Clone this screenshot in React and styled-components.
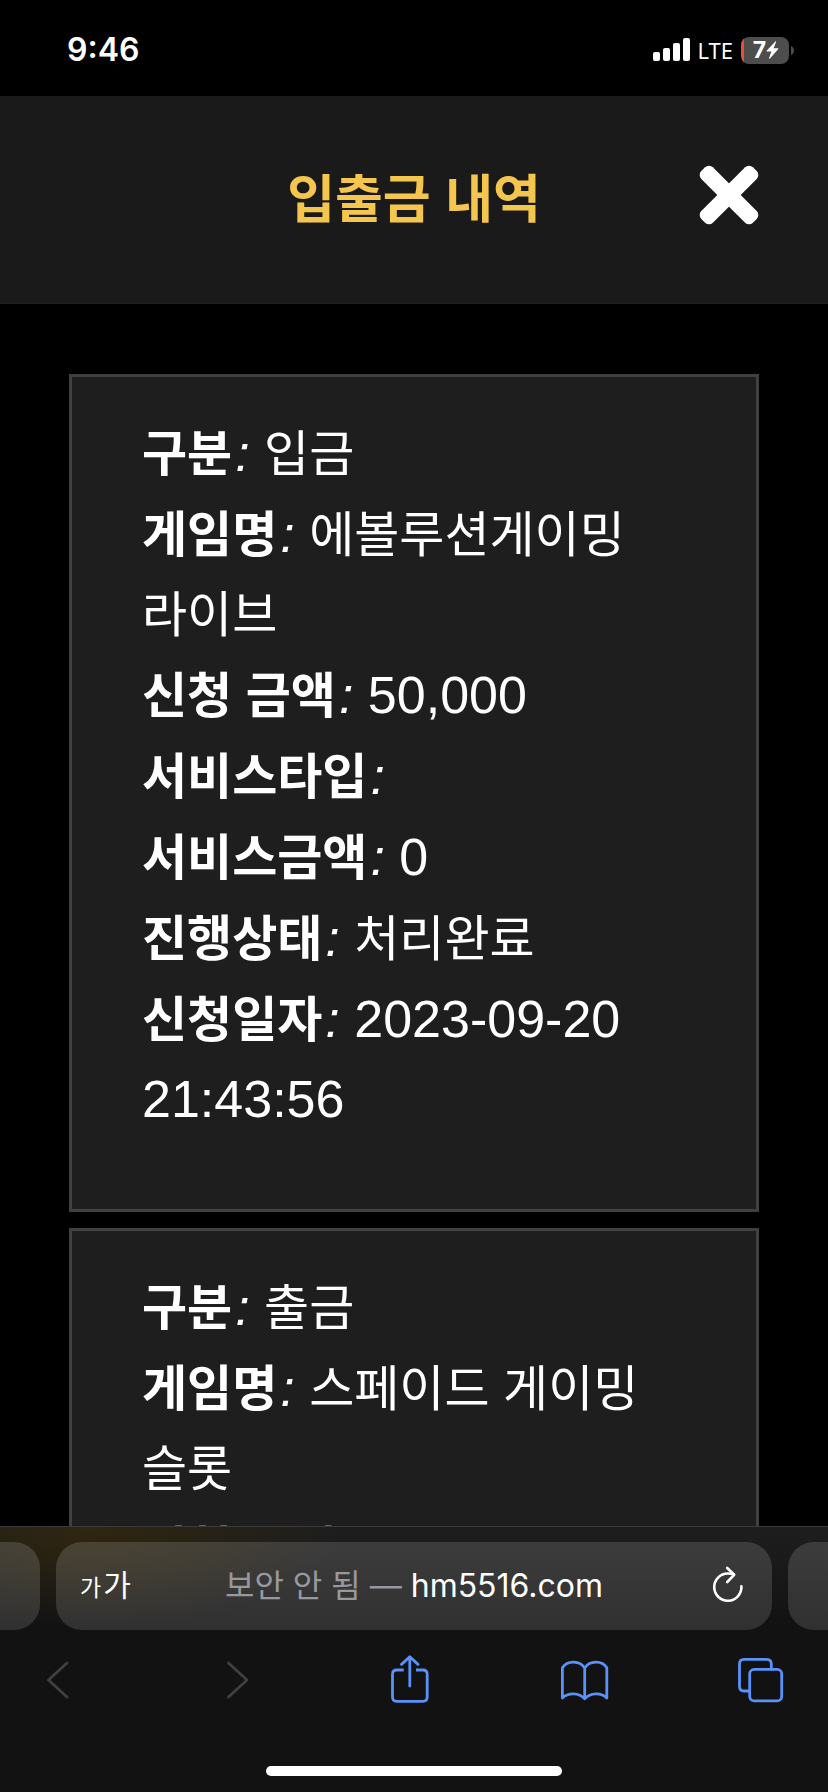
import React from "react";
import styled, { createGlobalStyle } from "styled-components";

const GlobalStyle = createGlobalStyle`
    * {
        box-sizing: border-box;
    }
    body {
        margin: 0;
        background: #000;
    }
    button {
        margin: 0;
        padding: 0;
        border: 0;
        background: none;
        color: inherit;
        font: inherit;
        cursor: pointer;
    }
`;
const Screen = styled.div`
    display: flex;
    flex-direction: column;
    height: 100vh;
    overflow: hidden;
    background: #000;
    color: #fff;
    font-family: "Liberation Sans", "Noto Sans CJK KR", sans-serif;
`;

// 상태바
const StatusBar = styled.div`
    display: flex;
    flex: none;
    align-items: center;
    justify-content: space-between;
    height: 96px;
    padding: 4px 34px 0 67px;
    font-family: "Inter", sans-serif;
`;
const Time = styled.time`
    font-size: 32px;
    line-height: 40px;
    font-weight: 600;
`;
const StatusRight = styled.div`
    display: flex;
    align-items: center;
`;
const Network = styled.span`
    margin: 0 8px 0 6px;
    font-family: "Noto Sans", sans-serif;
    font-size: 22px;
    line-height: 28px;
`;
const Battery = styled.div`
    display: flex;
    align-items: center;
    justify-content: center;
    width: 48px;
    height: 27px;
    margin-right: 2px;
    padding-left: 2px;
    overflow: hidden;
    border-radius: 8px;
    background: linear-gradient(to right, #eb4e3d 3px, #4d4d4d 3px);
    font-size: 23px;
    line-height: 27px;
    font-weight: 700;
`;

// 헤더부분
const Header = styled.header`
    display: grid;
    flex: none;
    grid-template-columns: 1fr auto 1fr;
    align-items: center;
    height: 208px;
    padding: 0 59px;
    border-bottom: 1px solid #202020;
    background: #1a1a1a;
`;
const Title = styled.h1`
    grid-column: 2;
    margin: 0;
    color: #f5c64e;
    font-size: 52px;
    line-height: 80px;
    font-weight: 700;
`;
const CloseButton = styled.button`
    display: flex;
    justify-self: end;
    margin-bottom: 10px;
`;

// 내역 목록
const History = styled.main`
    display: flex;
    flex: 1;
    flex-direction: column;
    gap: 16px;
    min-height: 0;
    padding: 70px 69px 0;
    overflow: hidden;
`;
const Card = styled.article`
    display: flex;
    flex: none;
    flex-direction: column;
    gap: 1px;
    padding: 36px 70px 70px;
    border: 3px solid #404040;
    background: #1e1e1e;
`;
const Row = styled.p`
    margin: 0;
    font-size: 52px;
    line-height: 80px;
    word-break: keep-all;
`;
const Label = styled.strong`
    margin-right: 3px;
    font-size: 49px;
    line-height: 1;
    font-weight: 700;
`;
const Value = styled.span`
    font-size: ${props => props.$number ? 52 : 49}px;
    line-height: 1;
`;

// 브라우저 하단
const BrowserBar = styled.footer`
    display: flex;
    flex: none;
    flex-direction: column;
    height: 266px;
    padding-bottom: 16px;
    border-top: 1px solid #3a3a3a;
    background:
        radial-gradient(ellipse 250px 100px at 90px 0, rgba(70, 50, 0, 0.45), transparent),
        linear-gradient(#1e1e1e, #121212 100px);
    font-family: "Inter", "Noto Sans CJK KR", sans-serif;
`;
const TabStrip = styled.div`
    display: flex;
    gap: 16px;
    height: 88px;
    margin-top: 15px;
`;
const SideTab = styled.div`
    width: 40px;
    border-radius: ${props => props.$right ? "26px 0 0 26px" : "0 26px 26px 0"};
    background: linear-gradient(rgba(255, 255, 255, 0.14), rgba(255, 255, 255, 0.13));
`;
const AddressBar = styled.div`
    display: grid;
    flex: 1;
    grid-template-columns: 1fr auto 1fr;
    align-items: center;
    padding: 0 24px;
    border-radius: 26px;
    background: linear-gradient(rgba(255, 255, 255, 0.14), rgba(255, 255, 255, 0.13));
`;
const TextSizeButton = styled.button`
    justify-self: start;
    font-size: 30px;
    line-height: 40px;
    font-weight: 400;
`;
const SmallLetter = styled.span`
    margin-right: 2px;
    font-size: 23px;
`;
const Address = styled.button`
    font-size: 32px;
    line-height: 40px;
    white-space: nowrap;
`;
const Insecure = styled.span`
    color: #98989f;
`;
const ReloadButton = styled.button`
    display: flex;
    justify-self: end;
`;
const Toolbar = styled.nav`
    display: flex;
    justify-content: space-between;
    margin-top: 22px;
    padding: 0 40px 0 29px;
`;
const ToolButton = styled.button`
    display: flex;
    color: #5a92f8;

    &:disabled {
        color: #404040;
    }
`;
const HomeIndicator = styled.div`
    width: 296px;
    height: 10px;
    margin: auto auto 0;
    border-radius: 5px;
    background: #fff;
`;

const histories = [
  {
    id: 1,
    rows: [
      { label: "구분", value: "입금" },
      { label: "게임명", value: "에볼루션게이밍 라이브" },
      { label: "신청 금액", value: "50,000", number: true },
      { label: "서비스타입", value: "" },
      { label: "서비스금액", value: "0", number: true },
      { label: "진행상태", value: "처리완료" },
      { label: "신청일자", value: "2023-09-20 21:43:56", number: true },
    ],
  },
  {
    id: 2,
    rows: [
      { label: "구분", value: "출금" },
      { label: "게임명", value: "스페이드 게이밍 슬롯" },
      { label: "신청 금액", value: "", number: true },
    ],
  },
];

const SignalIcon = () => (
  <svg width="38" height="24" viewBox="0 0 38 24" fill="#fff">
    <rect x="0" y="14" width="7" height="9" rx="2" />
    <rect x="10" y="10" width="7" height="13" rx="2" />
    <rect x="20" y="5" width="7" height="18" rx="2" />
    <rect x="30" y="0" width="7" height="23" rx="2" />
  </svg>
);

const BoltIcon = () => (
  <svg width="13" height="18" viewBox="0 0 13 18" fill="#fff">
    <path d="M9.6 0.3 L0.6 9.7 Q0.2 10.4 1 10.4 H5.4 L3 17.2 Q3.2 18 4 17.4 L12.3 8 Q12.6 7.2 11.8 7.2 H7.6 L10.2 0.8 Q10.2 0 9.6 0.3 Z" />
  </svg>
);

const BatteryTip = () => (
  <svg width="3" height="9" viewBox="0 0 3 9" fill="#4d4d4d">
    <path d="M0 0 Q3 1.5 3 4.5 Q3 7.5 0 9 Z" />
  </svg>
);

const CloseIcon = () => (
  <svg width="80" height="80" viewBox="-40 -40 80 80" fill="#fff">
    <rect x="-36.5" y="-8.2" width="73" height="16.4" rx="5.5" transform="rotate(45)" />
    <rect x="-36.5" y="-8.2" width="73" height="16.4" rx="5.5" transform="rotate(-45)" />
  </svg>
);

const ReloadIcon = () => (
  <svg width="40" height="40" viewBox="0 0 40 40" fill="none" stroke="#fff" strokeWidth="2.6" strokeLinecap="round" strokeLinejoin="round">
    <path d="M33.4 20.4 A13.6 13.6 0 1 1 19.8 7.5 Q23 7.5 25.8 8.3" />
    <path d="M19.2 2 L26.2 8.8 L19.2 16" />
  </svg>
);

const ToolIcon = ({ children }) => (
  <svg width="56" height="56" viewBox="0 0 56 56" fill="none" stroke="currentColor" strokeWidth="2.8" strokeLinecap="round" strokeLinejoin="round">
    {children}
  </svg>
);

const App = () => {
  return (
    <Screen>
      <GlobalStyle />
      <StatusBar>
        <Time>9:46</Time>
        <StatusRight>
          <SignalIcon />
          <Network>LTE</Network>
          <Battery>7<BoltIcon /></Battery>
          <BatteryTip />
        </StatusRight>
      </StatusBar>
      <Header>
        <Title>입출금 내역</Title>
        <CloseButton aria-label="닫기">
          <CloseIcon />
        </CloseButton>
      </Header>
      <History>
        {histories.map(item => (
          <Card key={item.id}>
            {item.rows.map(row => (
              <Row key={row.label}>
                <Label>{row.label}</Label>
                <i>:</i> <Value $number={row.number}>{row.value}</Value>
              </Row>
            ))}
          </Card>
        ))}
      </History>
      <BrowserBar>
        <TabStrip>
          <SideTab />
          <AddressBar>
            <TextSizeButton aria-label="글자 크기">
              <SmallLetter>가</SmallLetter>가
            </TextSizeButton>
            <Address>
              <Insecure>보안 안 됨 —</Insecure> hm5516.com
            </Address>
            <ReloadButton aria-label="새로고침">
              <ReloadIcon />
            </ReloadButton>
          </AddressBar>
          <SideTab $right />
        </TabStrip>
        <Toolbar>
          <ToolButton aria-label="뒤로" disabled>
            <ToolIcon>
              <path d="M38 11 L19.5 28 L38 45" />
            </ToolIcon>
          </ToolButton>
          <ToolButton aria-label="앞으로" disabled>
            <ToolIcon>
              <path d="M23.5 11 L42 28 L23.5 45" />
            </ToolIcon>
          </ToolButton>
          <ToolButton aria-label="공유">
            <ToolIcon>
              <path strokeLinecap="butt" d="M22.7 18 H15.7 Q11.5 18 11.5 22.2 V45 Q11.5 49.3 15.7 49.3 H42 Q46.2 49.3 46.2 45 V22.2 Q46.2 18 42 18 H35" />
              <path d="M28.8 34 V5 M20.5 12.4 L28.8 4.8 L37 12.4" />
            </ToolIcon>
          </ToolButton>
          <ToolButton aria-label="책갈피">
            <ToolIcon>
              <path d="M28.7 16 C24 8.5 11.5 8 6.4 15.8 V46 C12 40.3 23 40.3 28.7 46.8 C34.4 40.3 45.4 40.3 50.8 46 V15.8 C46 8 33.4 8.5 28.7 16 V46.8" />
            </ToolIcon>
          </ToolButton>
          <ToolButton aria-label="탭 보기">
            <ToolIcon>
              <rect x="17.7" y="17.3" width="32" height="31.6" rx="4.5" />
              <path d="M17.7 39 H12 Q7.5 39 7.5 34.5 V12 Q7.5 7.4 12 7.4 H34.8 Q39.3 7.4 39.3 12 V17.3" />
            </ToolIcon>
          </ToolButton>
        </Toolbar>
        <HomeIndicator />
      </BrowserBar>
    </Screen>
  );
};
export default App;
